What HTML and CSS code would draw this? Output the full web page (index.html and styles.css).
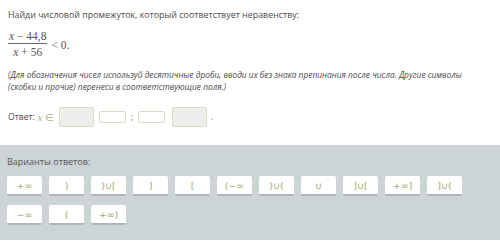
FILE: index.html
```html
<!DOCTYPE html>
<html>
<head>
<meta charset="utf-8">
<link rel="stylesheet" href="styles.css">
</head>
<body>
<div class="task">
  <p class="title">Найди числовой промежуток, который соответствует неравенству:</p>
  <div class="formula">
    <span class="frac">
      <span class="num"><i>x</i> − 44,8</span>
      <span class="den"><i>x</i> + 56</span>
    </span>
    <span class="rel">&lt; 0.</span>
  </div>
  <p class="hint">(Для обозначения чисел используй десятичные дроби, вводи их без знака препинания после числа. Другие символы (скобки и прочие) перенеси в соответствующие поля.)</p>
  <div class="answer">
    <span class="label">Ответ:</span>
    <span class="math"><i>x</i> ∈</span>
    <span class="box big"></span>
    <span class="box small"></span>
    <span class="sep">;</span>
    <span class="box small"></span>
    <span class="box big last"></span>
    <span class="sep dot">.</span>
  </div>
</div>
<div class="variants">
  <p class="vtitle">Варианты ответов:</p>
  <div class="tiles">
    <span class="tile">+∞</span>
    <span class="tile">)</span>
    <span class="tile">)∪[</span>
    <span class="tile">]</span>
    <span class="tile">[</span>
    <span class="tile">(−∞</span>
    <span class="tile">)∪(</span>
    <span class="tile">∪</span>
    <span class="tile">]∪[</span>
    <span class="tile">+∞]</span>
    <span class="tile">]∪(</span>
    <span class="tile">−∞</span>
    <span class="tile">(</span>
    <span class="tile">+∞)</span>
  </div>
</div>
</body>
</html>
```
FILE: styles.css
```css
html, body {
  margin: 0;
  padding: 0;
  background: #ffffff;
}
body {
  font-family: "Open Sans", "Noto Sans", sans-serif;
  color: #4a4a4a;
  width: 500px;
  height: 250px;
  overflow: hidden;
}
p { margin: 0; }
.task {
  padding: 9px 8px 0 8px;
  height: 136px;
  box-sizing: border-box;
}
.title {
  font-size: 8.9px;
  line-height: 12px;
}
.formula {
  display: flex;
  align-items: center;
  margin-top: 9px;
  font-family: "Liberation Serif", serif;
  font-size: 11.5px;
  color: #555;
}
.frac {
  display: inline-flex;
  flex-direction: column;
  align-items: center;
}
.num {
  padding: 0 1px 1px;
  border-bottom: 1px solid #666;
  line-height: 12px;
}
.den {
  line-height: 12px;
  padding-top: 2px;
}
.rel {
  margin-left: 4px;
  margin-top: 1px;
}
.hint {
  margin-top: 11px;
  font-size: 8.35px;
  line-height: 12px;
  font-style: italic;
}
.answer {
  display: flex;
  align-items: center;
  margin-top: 14px;
  font-size: 8.6px;
}
.label { margin-right: 3px; }
.math {
  font-family: "Liberation Serif", serif;
  font-size: 10px;
  color: #a7ad74;
  margin-right: 5px;
}
.box {
  box-sizing: border-box;
  border: 1px solid #d6dcc2;
  border-radius: 2px;
  background: #ffffff;
  flex: none;
}
.box.big {
  width: 35px;
  height: 20px;
  background: #eeeeee;
  margin-right: 5px;
}
.box.big.last {
  margin-left: 7px;
  margin-right: 4px;
}
.box.small {
  width: 27px;
  height: 12px;
}
.sep {
  margin: 0 5px;
  color: #666;
}
.dot { margin-left: 0; }
.variants {
  margin-top: 9px;
  background: #cdd4d6;
  height: 95px;
  box-sizing: border-box;
  padding: 11px 7px 0 7px;
}
.vtitle {
  font-size: 9px;
  line-height: 12px;
  color: #555;
}
.tiles {
  display: flex;
  flex-wrap: wrap;
  column-gap: 7px;
  row-gap: 9px;
  margin-top: 8px;
  width: 460px;
}
.tile {
  box-sizing: border-box;
  width: 35px;
  height: 20px;
  background: #ffffff;
  border-radius: 2px;
  border-bottom: 2px solid #aeb5b6;
  display: flex;
  align-items: center;
  justify-content: center;
  font-size: 9.5px;
  color: #a3a96e;
  font-family: "DejaVu Sans", sans-serif;
}
```
